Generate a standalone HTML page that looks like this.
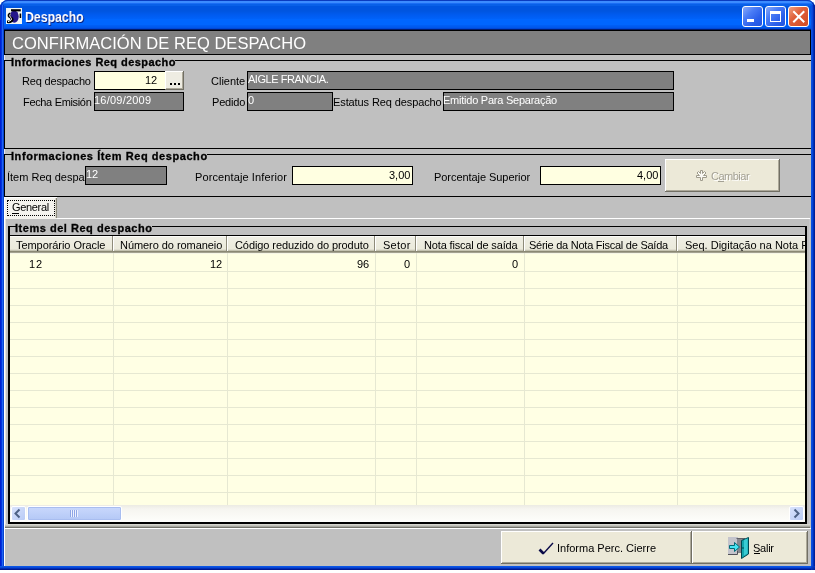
<!DOCTYPE html>
<html><head><meta charset="utf-8">
<style>
*{margin:0;padding:0;box-sizing:border-box}
html,body{width:815px;height:573px;overflow:hidden;background:#fff}
body{position:relative;font-family:"Liberation Sans",sans-serif;font-size:11px;color:#000}
.a{position:absolute}
.t{position:absolute;white-space:nowrap;line-height:20px;z-index:5;will-change:transform}
.bk{position:absolute;background:#000}
.dk{position:absolute;background:#808080;border:1px solid #000;z-index:3}
.cr{position:absolute;background:#FFFFE1;border:1px solid #000}
.xbtn{position:absolute;background:#ECE9D8;border-top:1px solid #fff;border-left:1px solid #fff;box-shadow:inset -1px -1px 0 #ACA899,inset 0 0 0 0 #000}
.xbtn::after{content:"";position:absolute;right:-1px;bottom:-1px;left:-1px;top:-1px;border-right:1px solid #716F64;border-bottom:1px solid #716F64}
.tb{position:absolute;top:6px;width:21px;height:21px;border:1px solid #fff;border-radius:3px}
.gl{position:absolute;background:#E6E8D2}
.hs{position:absolute;top:236px;width:1px;height:16px;background:#8E8B7A}
.hw{position:absolute;top:236px;width:1px;height:15px;background:#fff}
</style></head><body>
<!-- window frame -->
<div class="a" style="left:0;top:0;width:815px;height:570px;background:#0A54E0;border-radius:8px 8px 0 0;overflow:hidden">
  <div class="a" style="left:0;top:0;width:815px;height:30px;background:linear-gradient(to bottom,#0A50D8 0px,#0A50D8 1px,#3C8CFF 1px,#3C8CFF 3px,#1A6EF5 3px,#1A6EF5 4px,#0860E8 4px,#0860E8 6px,#0055E0 6px,#0055E0 11px,#005BF0 15px,#0062FA 19px,#0066FF 19px,#0066FF 25px,#0060F8 25px,#0055E8 28px,#0048D8 28px,#0048D8 29px,#001C70 29px,#001C70 30px)"></div>
  <div class="a" style="left:0;top:566px;width:815px;height:4px;background:linear-gradient(to bottom,#0A56E6 0,#0A56E6 1px,#0848D8 1px,#0848D8 2px,#0030B8 2px,#0030B8 3px,#001890 3px)"></div>
  <div class="a" style="left:0;top:5px;width:4px;height:561px;background:linear-gradient(to right,#0020D0 0,#0020D0 1px,#0034E0 1px,#0034E0 2px,#2064F2 2px,#2064F2 3px,#0844D0 3px)"></div>
  <div class="a" style="left:811px;top:5px;width:4px;height:565px;background:linear-gradient(to right,#0A50E0 0,#0A50E0 1px,#0844D8 1px,#0844D8 2px,#0030B8 2px,#0030B8 3px,#001E98 3px)"></div>
</div>
<div class="a" style="left:0;top:0;width:815px;height:20px;border:1px solid #0A3CC0;border-right-color:#001E98;border-bottom:0;border-radius:8px 8px 0 0;z-index:7"></div>
<div class="a" style="left:811px;top:566px;width:4px;height:4px;background:linear-gradient(135deg,#0848D8 0,#0030B8 50%,#001890 100%);z-index:7"></div>
<!-- title buttons -->
<div class="tb" style="left:742px;background:linear-gradient(135deg,#8AAAF8 0%,#4A7CF6 35%,#2A5EEA 70%,#2254E0 100%)"><div class="a" style="left:4px;top:12px;width:7px;height:3px;background:#fff"></div></div>
<div class="tb" style="left:765px;background:linear-gradient(135deg,#8AAAF8 0%,#4A7CF6 35%,#2A5EEA 70%,#2254E0 100%)"><div class="a" style="left:4px;top:4px;width:11px;height:11px;border:1px solid #fff;border-top-width:3px"></div></div>
<div class="tb" style="left:788px;background:linear-gradient(135deg,#F0A080 0%,#E0603A 40%,#D04A22 100%)">
 <svg class="a" style="left:0;top:0" width="19" height="19" viewBox="0 0 19 19"><path d="M5 5 L14.5 14.5 M14.5 5 L5 14.5" stroke="#fff" stroke-width="2" stroke-linecap="square"/></svg>
</div>
<!-- app icon -->
<svg class="a" style="left:6px;top:8px;z-index:6" width="16" height="16" viewBox="0 0 16 16">
 <rect width="16" height="16" fill="#F2F6F2"/>
 <ellipse cx="8.3" cy="8.6" rx="4.4" ry="6.2" fill="#24168A"/>
 <path d="M5 1.2 H14.8 V3.4 H5Z" fill="#000"/>
 <rect x="13.6" y="5.5" width="1.6" height="4.5" fill="#000"/>
 <path d="M4 4.5 Q1 5.5 1.8 8.5 Q2.6 10 4.4 10.6 Q5 12.2 3 12.6 H1 V15 Q6.5 15.8 7.6 12 Q7.6 9 5 8.4 Q4 7.6 4.8 6.4Z" fill="#000"/>
 <path d="M4.2 6.2 Q3 8 4.6 9.3 Q5.8 10.2 5.2 12 L2 13.8" fill="none" stroke="#fff" stroke-width="1"/>
</svg>
<!-- client -->
<div class="a" style="left:4px;top:30px;width:807px;height:536px;background:#C0C0C0"></div>
<!-- header panel -->
<div class="a" style="left:4px;top:30px;width:807px;height:25px;background:#808080;border:1px solid #000"></div>
<div class="a" style="left:4px;top:55px;width:1px;height:5px;background:#E8E8F0"></div>
<!-- group 1 -->
<div class="bk" style="left:4px;top:60px;width:8px;height:1px"></div>
<div class="bk" style="left:175px;top:60px;width:636px;height:1px"></div>
<div class="bk" style="left:4px;top:60px;width:1px;height:89px"></div>
<div class="bk" style="left:4px;top:148px;width:807px;height:1px"></div>
<div class="a" style="left:4px;top:149px;width:1px;height:5px;background:#E8E8F0"></div>
<!-- group1 fields -->
<div class="cr" style="left:94px;top:71px;width:72px;height:19px"></div>
<div class="xbtn" style="left:165px;top:71px;width:18px;height:18px;background:#EEECE2"></div>
<div class="a" style="left:170px;top:83px;width:2px;height:2px;background:#000;z-index:4"></div>
<div class="a" style="left:174px;top:83px;width:2px;height:2px;background:#000;z-index:4"></div>
<div class="a" style="left:178px;top:83px;width:2px;height:2px;background:#000;z-index:4"></div>
<div class="dk" style="left:94px;top:92px;width:90px;height:19px"></div>
<div class="dk" style="left:247px;top:71px;width:427px;height:19px"></div>
<div class="dk" style="left:247px;top:92px;width:86px;height:19px"></div>
<div class="dk" style="left:443px;top:92px;width:231px;height:19px"></div>
<!-- group 2 -->
<div class="bk" style="left:4px;top:154px;width:8px;height:1px"></div>
<div class="bk" style="left:207px;top:154px;width:604px;height:1px"></div>
<div class="bk" style="left:4px;top:154px;width:1px;height:43px"></div>
<div class="bk" style="left:4px;top:196px;width:807px;height:1px"></div>
<div class="dk" style="left:85px;top:166px;width:82px;height:19px"></div>
<div class="cr" style="left:292px;top:166px;width:121px;height:19px"></div>
<div class="cr" style="left:540px;top:166px;width:121px;height:19px"></div>
<div class="xbtn" style="left:665px;top:159px;width:114px;height:32px"></div>
<svg class="a" style="left:695px;top:169px;z-index:5" width="13" height="13" viewBox="0 0 13 13">
 <path d="M5.5 1.5 H7.5 V4.5 L9.5 2.5 L11 4 L8.5 6.5 H11.5 V8.5 H7.5 V11.5 H5.5 V8.5 H1.5 V6.5 H4.5 L2 4 L3.5 2.5 L5.5 4.5Z" fill="#FBFAF5" stroke="#9E9B8C" stroke-width="1"/>
</svg>
<div class="a" style="left:718px;top:181px;width:6px;height:1px;background:#A3A093;z-index:5"></div>
<!-- tab -->
<div class="a" style="left:4px;top:197px;width:53px;height:22px;background:#F4F3EE;border-left:1px solid #fff;border-top:1px solid #fff"></div>
<div class="a" style="left:55px;top:198px;width:1px;height:20px;background:#D8D6CC"></div><div class="a" style="left:56px;top:198px;width:1px;height:20px;background:#8C8A7C"></div>
<div class="a" style="left:7px;top:200px;width:48px;height:16px;border:1px dotted #000"></div>
<div class="a" style="left:12px;top:213px;width:7px;height:1px;background:#000;z-index:5"></div>
<!-- tab page -->
<div class="a" style="left:57px;top:218px;width:753px;height:1px;background:#fff"></div>
<div class="a" style="left:4px;top:218px;width:1px;height:310px;background:#fff"></div>
<div class="a" style="left:5px;top:219px;width:1px;height:308px;background:#E6E2D8"></div>
<div class="a" style="left:809px;top:219px;width:1px;height:308px;background:#C8C8CC"></div>
<div class="a" style="left:5px;top:524px;width:805px;height:4px;background:linear-gradient(to bottom,#D6D6CE 0,#D6D6CE 1px,#C4C4BC 1px,#C4C4BC 2px,#A8A8A0 2px,#A8A8A0 3px,#74746C 3px)"></div>
<div class="a" style="left:4px;top:528px;width:807px;height:1px;background:#fff"></div>
<div class="a" style="left:4px;top:528px;width:1px;height:38px;background:#fff"></div>
<!-- group 3 -->
<div class="bk" style="left:8px;top:226px;width:8px;height:1px"></div>
<div class="bk" style="left:152px;top:226px;width:655px;height:1px"></div>
<div class="bk" style="left:8px;top:226px;width:2px;height:10px"></div>
<div class="bk" style="left:805px;top:226px;width:2px;height:10px"></div>
<!-- grid -->
<div class="a" style="left:8px;top:235px;width:799px;height:289px;background:#FFFFE4;border:2px solid #000;border-top-width:1px;overflow:hidden">
 <div class="a" style="left:0;top:0;width:795px;height:18px;background:linear-gradient(to bottom,#FCFCF8 0,#FCFCF8 1px,#EFEEE4 1px,#EBEADB 13px,#E0DED0 13px,#E0DED0 14px,#C4C2B0 14px,#C4C2B0 15px,#8A8874 15px,#8A8874 16px,#A4A290 16px,#A4A290 17px,#F6F6E6 17px)"></div>
</div>
<div class="hs" style="left:112px"></div><div class="hw" style="left:113px"></div>
<div class="hs" style="left:226px"></div><div class="hw" style="left:227px"></div>
<div class="hs" style="left:374px"></div><div class="hw" style="left:375px"></div>
<div class="hs" style="left:415px"></div><div class="hw" style="left:416px"></div>
<div class="hs" style="left:523px"></div><div class="hw" style="left:524px"></div>
<div class="hs" style="left:676px"></div><div class="hw" style="left:677px"></div>
<div class="gl" style="left:113px;top:253px;width:1px;height:252px"></div>
<div class="gl" style="left:227px;top:253px;width:1px;height:252px"></div>
<div class="gl" style="left:375px;top:253px;width:1px;height:252px"></div>
<div class="gl" style="left:416px;top:253px;width:1px;height:252px"></div>
<div class="gl" style="left:524px;top:253px;width:1px;height:252px"></div>
<div class="gl" style="left:677px;top:253px;width:1px;height:252px"></div>
<div class="gl" style="left:10px;top:271px;width:795px;height:1px"></div>
<div class="gl" style="left:10px;top:288px;width:795px;height:1px"></div>
<div class="gl" style="left:10px;top:305px;width:795px;height:1px"></div>
<div class="gl" style="left:10px;top:322px;width:795px;height:1px"></div>
<div class="gl" style="left:10px;top:339px;width:795px;height:1px"></div>
<div class="gl" style="left:10px;top:356px;width:795px;height:1px"></div>
<div class="gl" style="left:10px;top:373px;width:795px;height:1px"></div>
<div class="gl" style="left:10px;top:390px;width:795px;height:1px"></div>
<div class="gl" style="left:10px;top:407px;width:795px;height:1px"></div>
<div class="gl" style="left:10px;top:424px;width:795px;height:1px"></div>
<div class="gl" style="left:10px;top:441px;width:795px;height:1px"></div>
<div class="gl" style="left:10px;top:458px;width:795px;height:1px"></div>
<div class="gl" style="left:10px;top:475px;width:795px;height:1px"></div>
<div class="gl" style="left:10px;top:492px;width:795px;height:1px"></div>
<!-- scrollbar -->
<div class="a" style="left:10px;top:505px;width:795px;height:17px;background:linear-gradient(to bottom,#ECEBE3 0,#F6F5F0 4px,#FEFEFB 100%)"></div>
<div class="a" style="left:11px;top:506px;width:15px;height:15px;background:linear-gradient(135deg,#D8E2FC,#B9CBF6);border:1px solid #fff;border-radius:2px"></div>
<svg class="a" style="left:11px;top:506px" width="15" height="15" viewBox="0 0 15 15"><path d="M8.5 3.5 L4.5 7.5 L8.5 11.5" fill="none" stroke="#4D6185" stroke-width="2"/></svg>
<div class="a" style="left:27px;top:506px;width:95px;height:15px;background:linear-gradient(to bottom,#C9D8FC,#B4C8F6);border:1px solid #fff;border-radius:2px;box-shadow:inset 0 0 0 1px #A8BDF0"></div>
<div class="a" style="left:70px;top:510px;width:8px;height:7px;background:repeating-linear-gradient(to right,#8EA6E6 0,#8EA6E6 1px,#EEF2FE 1px,#EEF2FE 2px)"></div>
<div class="a" style="left:789px;top:506px;width:15px;height:15px;background:linear-gradient(135deg,#D8E2FC,#B9CBF6);border:1px solid #fff;border-radius:2px"></div>
<svg class="a" style="left:789px;top:506px" width="15" height="15" viewBox="0 0 15 15"><path d="M5.5 3.5 L9.5 7.5 L5.5 11.5" fill="none" stroke="#4D6185" stroke-width="2"/></svg>
<!-- bottom buttons -->
<div class="xbtn" style="left:501px;top:531px;width:190px;height:32px"></div>
<div class="xbtn" style="left:692px;top:531px;width:115px;height:32px"></div>
<svg class="a" style="left:534px;top:538px;z-index:5" width="22" height="20" viewBox="0 0 22 20">
 <path d="M5.5 11.5 L9.5 15.5" fill="none" stroke="#0A0A48" stroke-width="2.6"/>
 <path d="M9 16 L19 5" fill="none" stroke="#0A0A48" stroke-width="1.4"/>
</svg>
<!-- salir icon -->
<svg class="a" style="left:728px;top:537px;z-index:5" width="22" height="22" viewBox="0 0 22 22">
 <rect x="0" y="0" width="10" height="17" fill="#C4C4CC"/>
 <rect x="9" y="1" width="8" height="15" fill="#86868E"/>
 <path d="M0 17.5 H9.5 V14" fill="none" stroke="#505058" stroke-width="1"/>
 <path d="M8.5 1.5 H17" fill="none" stroke="#606068" stroke-width="1"/>
 <path d="M1.5 8.5 H6.5 V5.5 L11.5 10 L6.5 14.5 V11.5 H1.5 Z" fill="#48E4F4" stroke="#006A78" stroke-width="1"/>
 <path d="M13.5 3.5 L20.5 0.5 V17 L13.5 21.5 Z" fill="#14A6AE" stroke="#004650" stroke-width="1"/>
 <path d="M16 3 L19.5 1.5 V16.5 L16 18.5 Z" fill="#38CCD4"/>
 <rect x="14.5" y="10" width="1" height="2" fill="#004650"/>
</svg>
<div class="a" style="left:754px;top:553px;width:6px;height:1px;background:#000;z-index:5"></div>
<div class='t' style="left:25.12px;top:7px;font-size:14px;font-weight:700;color:#fff;letter-spacing:0.000px;text-shadow:1px 1px 0 #0A1E7A;transform:scaleX(0.8769);transform-origin:0 0">Despacho</div>
<div class='t' style="left:12.00px;top:33px;font-size:16.5px;font-weight:400;color:#fff;letter-spacing:0.037px;">CONFIRMACIÓN DE REQ DESPACHO</div>
<div class='t' style="left:11.00px;top:52px;font-size:11px;font-weight:700;color:#000;letter-spacing:0.440px;-webkit-text-stroke:0.3px #000">Informaciones Req despacho</div>
<div class='t' style="left:22.00px;top:71px;font-size:11px;font-weight:400;color:#000;letter-spacing:-0.182px;">Req despacho</div>
<div class='t' style="left:145.00px;top:70px;font-size:11px;font-weight:400;color:#000;letter-spacing:0.000px;">12</div>
<div class='t' style="left:23.00px;top:92px;font-size:11px;font-weight:400;color:#000;letter-spacing:-0.333px;">Fecha Emisión</div>
<div class='t' style="left:94.00px;top:90px;font-size:11px;font-weight:400;color:#fff;letter-spacing:0.222px;">16/09/2009</div>
<div class='t' style="left:211.00px;top:71px;font-size:11px;font-weight:400;color:#000;letter-spacing:0.000px;">Cliente</div>
<div class='t' style="left:248.00px;top:69px;font-size:11px;font-weight:400;color:#fff;letter-spacing:-0.462px;">AIGLE FRANCIA.</div>
<div class='t' style="left:212.00px;top:92px;font-size:11px;font-weight:400;color:#000;letter-spacing:-0.200px;">Pedido</div>
<div class='t' style="left:248.00px;top:90px;font-size:11px;font-weight:400;color:#fff;letter-spacing:0.000px;">0</div>
<div class='t' style="left:333.00px;top:92px;font-size:11px;font-weight:400;color:#000;letter-spacing:-0.105px;">Estatus Req despacho</div>
<div class='t' style="left:443.00px;top:90px;font-size:11px;font-weight:400;color:#fff;letter-spacing:-0.238px;">Emitido Para Separação</div>
<div class='t' style="left:11.00px;top:146px;font-size:11px;font-weight:700;color:#000;letter-spacing:0.567px;-webkit-text-stroke:0.3px #000">Informaciones Ítem Req despacho</div>
<div class='t' style="left:7.00px;top:167px;font-size:11px;font-weight:400;color:#000;letter-spacing:0.000px;;z-index:2">Ítem Req despacho</div>
<div class='t' style="left:86.00px;top:164px;font-size:11px;font-weight:400;color:#fff;letter-spacing:0.000px;">12</div>
<div class='t' style="left:195.00px;top:167px;font-size:11px;font-weight:400;color:#000;letter-spacing:0.111px;">Porcentaje Inferior</div>
<div class='t' style="left:389.00px;top:165px;font-size:11px;font-weight:400;color:#000;letter-spacing:0.000px;">3,00</div>
<div class='t' style="left:434.00px;top:167px;font-size:11px;font-weight:400;color:#000;letter-spacing:-0.056px;">Porcentaje Superior</div>
<div class='t' style="left:637.00px;top:165px;font-size:11px;font-weight:400;color:#000;letter-spacing:0.000px;">4,00</div>
<div class='t' style="left:711.00px;top:166px;font-size:11px;font-weight:400;color:#A3A093;letter-spacing:-0.500px;text-shadow:1px 1px 0 #fff">Cambiar</div>
<div class='t' style="left:12.00px;top:197px;font-size:11px;font-weight:400;color:#000;letter-spacing:-0.333px;">General</div>
<div class='t' style="left:15.00px;top:218px;font-size:11px;font-weight:700;color:#000;letter-spacing:0.524px;-webkit-text-stroke:0.3px #000">Items del Req despacho</div>
<div class='t' style="left:16.00px;top:235px;font-size:11px;font-weight:400;color:#000;letter-spacing:-0.062px;">Temporário Oracle</div>
<div class='t' style="left:120.00px;top:235px;font-size:11px;font-weight:400;color:#000;letter-spacing:-0.059px;">Número do romaneio</div>
<div class='t' style="left:235.00px;top:235px;font-size:11px;font-weight:400;color:#000;letter-spacing:-0.080px;">Código reduzido do produto</div>
<div class='t' style="left:383.00px;top:235px;font-size:11px;font-weight:400;color:#000;letter-spacing:0.250px;">Setor</div>
<div class='t' style="left:424.00px;top:235px;font-size:11px;font-weight:400;color:#000;letter-spacing:-0.158px;">Nota fiscal de saída</div>
<div class='t' style="left:529.00px;top:235px;font-size:11px;font-weight:400;color:#000;letter-spacing:-0.250px;">Série da Nota Fiscal de Saída</div>
<div class='t' style="left:685.00px;top:235px;font-size:11px;font-weight:400;color:#000;letter-spacing:0.000px;;clip:rect(-10px,120.00px,40px,-10px)">Seq. Digitação na Nota Fiscal de Saída</div>
<div class='t' style="left:29.00px;top:254px;font-size:11px;font-weight:400;color:#000;letter-spacing:1.000px;">12</div>
<div class='t' style="left:210.00px;top:254px;font-size:11px;font-weight:400;color:#000;letter-spacing:0.000px;">12</div>
<div class='t' style="left:357.00px;top:254px;font-size:11px;font-weight:400;color:#000;letter-spacing:0.000px;">96</div>
<div class='t' style="left:404.00px;top:254px;font-size:11px;font-weight:400;color:#000;letter-spacing:0.000px;">0</div>
<div class='t' style="left:512.00px;top:254px;font-size:11px;font-weight:400;color:#000;letter-spacing:0.000px;">0</div>
<div class='t' style="left:557.00px;top:538px;font-size:11px;font-weight:400;color:#000;letter-spacing:0.000px;">Informa Perc. Cierre</div>
<div class='t' style="left:753.00px;top:538px;font-size:11px;font-weight:400;color:#000;letter-spacing:-0.250px;">Salir</div>
</body></html>
